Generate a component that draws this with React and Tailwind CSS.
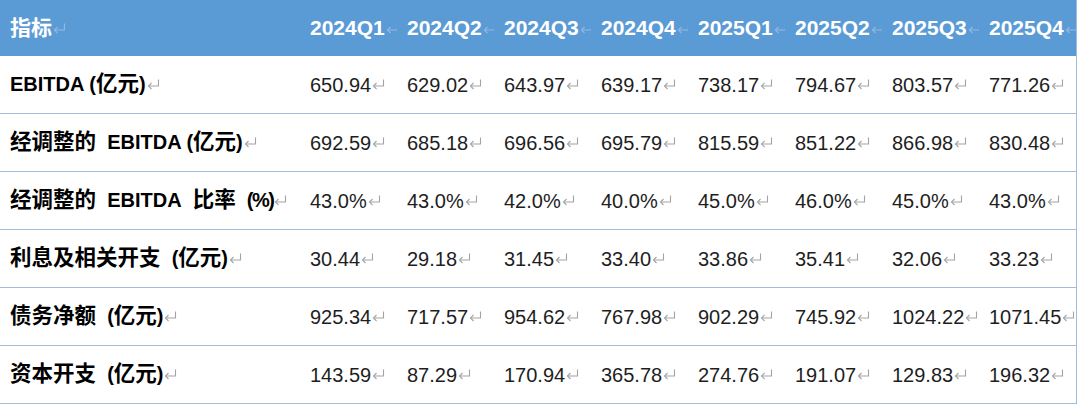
const quarters = ["2024Q1", "2024Q2", "2024Q3", "2024Q4", "2025Q1", "2025Q2", "2025Q3", "2025Q4"];

const rows = [
  {
    label: (
      <>
        EBITDA (<span className="text-[21.5px]">亿元</span>)
      </>
    ),
    values: ["650.94", "629.02", "643.97", "639.17", "738.17", "794.67", "803.57", "771.26"],
  },
  {
    label: (
      <>
        <span className="text-[21.5px]">经调整的</span>&nbsp; EBITDA (<span className="text-[21.5px]">亿元</span>)
      </>
    ),
    values: ["692.59", "685.18", "696.56", "695.79", "815.59", "851.22", "866.98", "830.48"],
  },
  {
    label: (
      <>
        <span className="text-[21.5px]">经调整的</span>&nbsp; EBITDA&nbsp; <span className="text-[21.5px]">比率</span>&nbsp;{" "}
        <span className="tracking-[-1.5px]">(%)</span>
      </>
    ),
    values: ["43.0%", "43.0%", "42.0%", "40.0%", "45.0%", "46.0%", "45.0%", "43.0%"],
  },
  {
    label: (
      <>
        <span className="text-[21.5px]">利息及相关开支</span>&nbsp; (<span className="text-[21.5px]">亿元</span>)
      </>
    ),
    values: ["30.44", "29.18", "31.45", "33.40", "33.86", "35.41", "32.06", "33.23"],
  },
  {
    label: (
      <>
        <span className="text-[21.5px]">债务净额</span>&nbsp; (<span className="text-[21.5px]">亿元</span>)
      </>
    ),
    values: ["925.34", "717.57", "954.62", "767.98", "902.29", "745.92", "1024.22", "1071.45"],
  },
  {
    label: (
      <>
        <span className="text-[21.5px]">资本开支</span>&nbsp; (<span className="text-[21.5px]">亿元</span>)
      </>
    ),
    values: ["143.59", "87.29", "170.94", "365.78", "274.76", "191.07", "129.83", "196.32"],
  },
];

// Word-style paragraph mark
const Mark = ({ color = "#a3a3a3" }) => (
  <svg width="13" height="11" viewBox="0 0 13 11" className="ml-[1px] shrink-0" fill="none" stroke={color} strokeWidth="1.1">
    <path d="M11.5 0.5 V7 H1.5" />
    <path d="M4.5 4 L1.5 7 L4.5 10" />
  </svg>
);

const App = () => {
  return (
    <div className="w-[1080px] h-[410px] bg-white overflow-hidden font-['Liberation_Sans','Noto_Sans_CJK_SC',sans-serif]">
      <div className="w-[1077px] border-r border-[#a3bcd8]">
        {/* Header */}
        <div className="grid grid-cols-[300px_repeat(8,97px)] h-[56px] bg-[#5b9bd5] text-white font-bold text-[21px]">
          <div className="flex items-center pl-[10px] overflow-hidden whitespace-nowrap">
            指标
            <Mark color="#93b8e0" />
          </div>
          {quarters.map((q) => (
            <div key={q} className="flex items-center pl-[10px] overflow-hidden whitespace-nowrap">
              {q}
              <Mark color="#93b8e0" />
            </div>
          ))}
        </div>

        {/* Body */}
        {rows.map((row, i) => (
          <div
            key={i}
            className="grid grid-cols-[300px_repeat(8,97px)] h-[58px] border-b border-[#a3bcd8] text-[20px] text-[#1e1e1e]"
          >
            <div className="flex items-center pl-[10px] font-bold text-black whitespace-nowrap overflow-hidden">
              <span>{row.label}</span>
              <Mark />
            </div>
            {row.values.map((v, j) => (
              <div key={j} className="flex items-center pl-[10px] whitespace-nowrap overflow-hidden">
                {v}
                <Mark />
              </div>
            ))}
          </div>
        ))}
      </div>
    </div>
  );
};

export default App;
